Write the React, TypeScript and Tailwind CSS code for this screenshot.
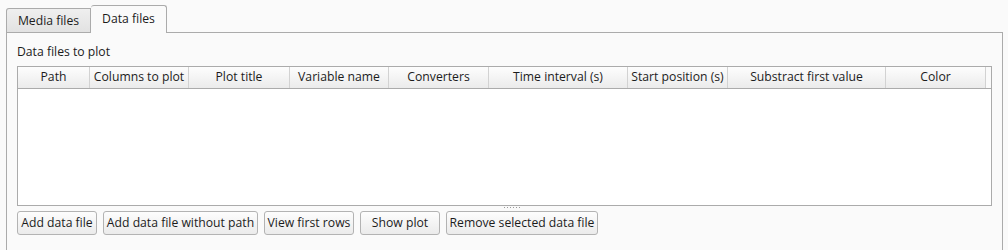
import React from "react";

const cols: [string, number][] = [
  ["Path", 72],
  ["Columns to plot", 99],
  ["Plot title", 101],
  ["Variable name", 99],
  ["Converters", 100],
  ["Time interval (s)", 139],
  ["Start position (s)", 100],
  ["Substract first value", 158],
  ["Color", 100],
];

const buttons: [string, number][] = [
  ["Add data file", 80],
  ["Add data file without path", 155],
  ["View first rows", 90],
  ["Show plot", 80],
  ["Remove selected data file", 152],
];

export default function App() {
  return (
    <div
      className="w-[1008px] h-[250px] bg-[#fafafa] text-[#1c1c1c] text-[12.2px] overflow-hidden"
      style={{ fontFamily: '"Open Sans", "Noto Sans", sans-serif' }}
    >
      <div className="flex items-end h-[32px] pl-[6px]">
        <div className="h-[24px] w-[85px] flex items-center justify-center border border-b-0 border-[#ababab] rounded-tl-[3px] bg-gradient-to-b from-[#efefef] to-[#e2e2e2] pt-[1px]">
          Media files
        </div>
        <div className="relative z-10 mb-[-1px] h-[28px] w-[76px] flex items-center justify-center border border-b-0 border-l-0 border-[#ababab] rounded-t-[3px] bg-[#fafafa] pb-[1px]">
          Data files
        </div>
      </div>
      <div className="ml-[6px] w-[997px] h-[240px] border border-[#ababab] px-[10px] pt-[9px]">
        <div className="h-[24px] leading-[20px]">Data files to plot</div>
        <div className="h-[140px] border border-[#ababab] bg-white flex flex-col">
          <div className="flex h-[22px] border-b border-[#ababab]">
            {cols.map(([name, w]) => (
              <div
                key={name}
                className="h-full flex items-center justify-center border-r border-[#d2d2d2] bg-gradient-to-b from-[#fdfdfd] to-[#ebebeb] whitespace-nowrap"
                style={{ width: w }}
              >
                {name}
              </div>
            ))}
            <div className="flex-1 bg-[#fafafa]" />
          </div>
          <div className="flex-1 bg-white" />
        </div>
        <div className="h-[5px] flex justify-center pt-[1px] pl-[16px]">
          <div className="flex gap-[1px]">
            {[0, 1, 2, 3, 4, 5].map((i) => (
              <div key={i} className="w-[1px] h-[1px] bg-[#9a9a9a] mr-[1px]" />
            ))}
          </div>
        </div>
        <div className="flex gap-[6px]">
          {buttons.map(([label, w]) => (
            <div
              key={label}
              className="h-[24px] flex items-center justify-center border border-[#b3b3b3] rounded-[3px] bg-gradient-to-b from-[#fdfdfd] to-[#ebebeb] whitespace-nowrap"
              style={{ width: w }}
            >
              {label}
            </div>
          ))}
        </div>
      </div>
    </div>
  );
}
